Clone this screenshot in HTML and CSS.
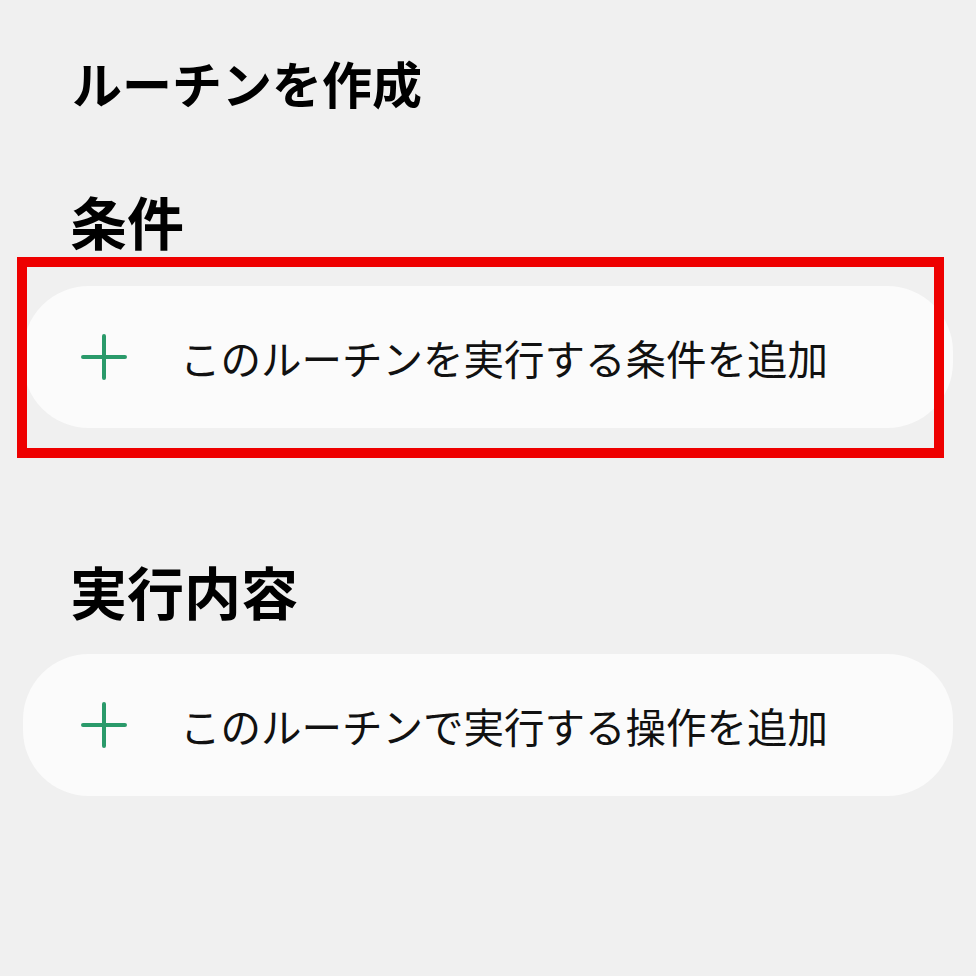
FILE: index.html
```html
<!DOCTYPE html>
<html lang="ja">
<head>
    <meta charset="UTF-8">
    <meta name="viewport" content="width=device-width, initial-scale=1.0">
    <title>ルーチンを作成</title>
    <link rel="stylesheet" href="styles.css">
</head>
<body>

    <div class="page">
        <h1 class="page-title">ルーチンを作成</h1>

        <!-- Conditions -->
        <section class="section section-if">
            <h2 class="section-title">条件</h2>
            <div class="card-wrap">
                <button class="add-card">
                    <svg class="plus" viewBox="0 0 46 46" width="46" height="46">
                        <path d="M23 2v42M2 23h42" />
                    </svg>
                    <span>このルーチンを実行する条件を追加</span>
                </button>
                <div class="highlight"></div>
            </div>
        </section>

        <!-- Actions -->
        <section class="section section-then">
            <h2 class="section-title">実行内容</h2>
            <button class="add-card">
                <svg class="plus" viewBox="0 0 46 46" width="46" height="46">
                    <path d="M23 2v42M2 23h42" />
                </svg>
                <span>このルーチンで実行する操作を追加</span>
            </button>
        </section>
    </div>

</body>
</html>
```

FILE: styles.css
```css
body {
    margin: 0;
    padding: 0;
    background-color: #f0f0f0;
    color: #000;
    font-family: "Noto Sans CJK JP", "Noto Sans", sans-serif;
}
.page {
    padding: 57px 23px 0 23px;
}
.page-title {
    margin: 0 0 0 49px;
    font-size: 50px;
    line-height: 50px;
    font-weight: 700;
}
.section-title {
    margin: 0 0 0 47px;
    font-size: 57px;
    line-height: 56px;
    font-weight: 700;
}
.section-if {
    margin-top: 85px;
}
.section-then {
    margin-top: 134px;
}
.card-wrap {
    position: relative;
}
.add-card {
    display: flex;
    align-items: center;
    width: 930px;
    height: 142px;
    margin-top: 38px;
    padding: 0 0 0 58px;
    border: none;
    border-radius: 66px;
    background-color: #fbfbfb;
    font-family: inherit;
    font-size: 40.5px;
    color: #111;
    cursor: pointer;
    text-align: left;
}
.section-then .add-card {
    margin-top: 36px;
}
.add-card span {
    margin-left: 53px;
}
.plus {
    flex: none;
}
.plus path {
    stroke: #2a9a6a;
    stroke-width: 4;
    stroke-linecap: round;
    fill: none;
}
.highlight {
    position: absolute;
    left: -6px;
    top: -29px;
    width: 907px;
    height: 181px;
    border: 10px solid #ee0000;
    pointer-events: none;
}
```
